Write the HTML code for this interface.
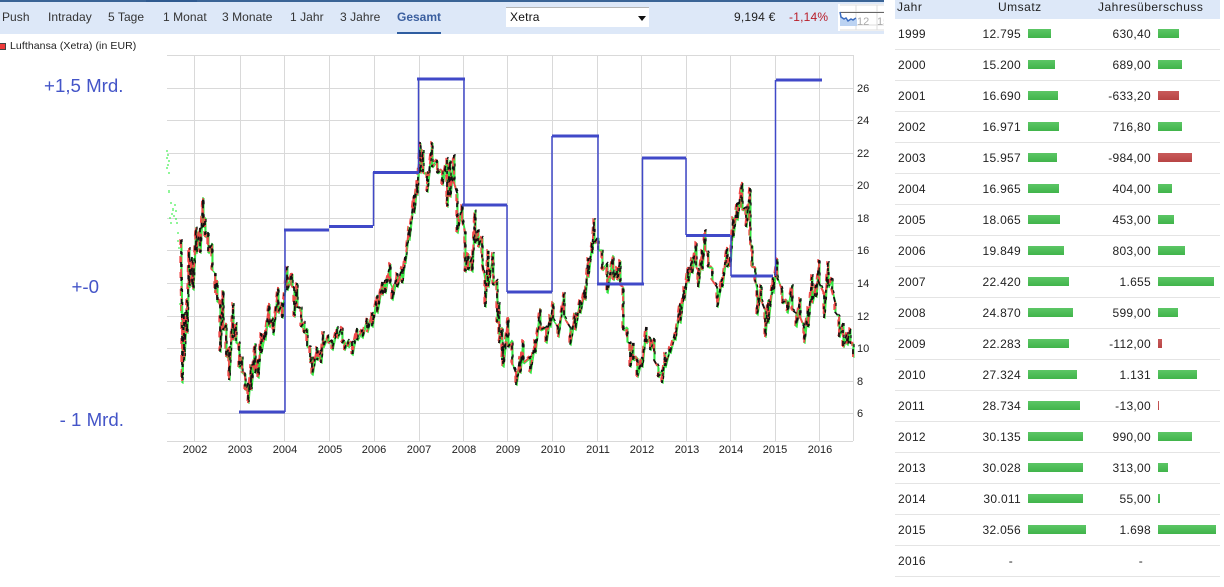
<!DOCTYPE html>
<html lang="de"><head><meta charset="utf-8"><title>Lufthansa</title>
<style>
html,body{margin:0;padding:0;background:#fff}
body{width:1224px;height:587px;position:relative;overflow:hidden;font-family:"Liberation Sans",Arial,sans-serif;color:#222}
.a{position:absolute;white-space:nowrap}
.n{top:10px;font-size:12px;line-height:15px;letter-spacing:.05px;color:#333}
.h{top:0;height:19px;line-height:14px;font-size:12px;letter-spacing:.5px;color:#222}
.r{position:absolute;left:895px;width:325px;height:30px;border-bottom:1px solid #e4e4e4;font-size:12px;letter-spacing:.3px;color:#222}
.r span{position:absolute;top:8px;line-height:15px}
.y{left:3px}.u{right:199px;text-align:right}.j{right:69px;text-align:right}
.b{position:absolute;top:10px;height:9px;background:linear-gradient(#5cc665,#40b44a)}
.b.m{background:linear-gradient(#c85a5a,#b84444)}
.b1{left:133px}.b2{left:263px}
.x{position:absolute;top:444px;width:40px;text-align:center;font-size:11px;line-height:13px;color:#222}
.l{position:absolute;left:857px;font-size:11px;line-height:13px;color:#222}
.big{position:absolute;font-size:18.700px;line-height:22px;color:#4455c8;text-align:right;width:124px;left:0}
</style></head><body>
<div class="a" style="left:0;top:2px;width:884px;height:32px;background:#dde8f8"></div>
<div class="a" style="left:0;top:0;width:884px;height:2px;background:#3a6496"></div>
<div class="a" style="left:146px;top:0;width:51px;height:2px;background:#2f5a90"></div>
<div class="a" style="left:397px;top:32px;width:44px;height:2px;background:#2f5da0"></div>
<span class="a n" style="left:2px">Push</span>
<span class="a n" style="left:48px">Intraday</span>
<span class="a n" style="left:108px">5 Tage</span>
<span class="a n" style="left:163px">1 Monat</span>
<span class="a n" style="left:222px">3 Monate</span>
<span class="a n" style="left:290px">1 Jahr</span>
<span class="a n" style="left:340px">3 Jahre</span>
<span class="a n" style="left:397px;font-weight:bold;color:#3b5f9f;letter-spacing:0">Gesamt</span>
<div class="a" style="left:506px;top:7px;width:143px;height:20px;background:#fff;border-top:1px solid #b5b5b5;box-sizing:border-box"></div>
<span class="a" style="left:510px;top:10px;font-size:12px;line-height:15px;letter-spacing:.2px;color:#111">Xetra</span>
<div class="a" style="left:638px;top:16px;width:0;height:0;border-left:4px solid transparent;border-right:4px solid transparent;border-top:5px solid #111"></div>
<span class="a" style="left:734px;top:10px;font-size:12px;line-height:15px;letter-spacing:.2px;color:#222">9,194 €</span>
<span class="a" style="left:789px;top:10px;font-size:12px;line-height:15px;letter-spacing:.2px;color:#b81c28">-1,14%</span>
<svg class="a" style="left:838px;top:4px" width="46" height="27" viewBox="0 0 46 27">
<rect width="46" height="27" fill="#fff"/>
<path d="M2 1H46M2 8H46M2 21H46M2 26H46M18 1V26M39 1V26" stroke="#ddd" fill="none"/>
<path d="M2 8.500H46" stroke="#666" fill="none"/>
<path d="M2 11L4 14 7 15 10 17 13 15 16 16 19 15V22H2Z" fill="#bcd3f2"/>
<path d="M2 8L3 13 6 15 8 14 10 17 13 15 15 16 18 14" stroke="#3a6cc0" stroke-width="1.500" fill="none"/>
<text x="19" y="21" font-size="11" fill="#aaa" font-family="Liberation Sans,sans-serif">12</text>
<text x="39" y="21" font-size="11" fill="#aaa" font-family="Liberation Sans,sans-serif">15</text>
</svg>

<div class="a" style="left:0;top:43px;width:6px;height:7px;box-sizing:border-box;background:#ee3a3a;border:1px solid #444;border-left:0"></div>
<span class="a" style="left:10px;top:40px;font-size:10.500px;line-height:13px;letter-spacing:.08px;color:#222">Lufthansa (Xetra) (in EUR)</span>

<div class="big" style="top:75px;width:123.500px">+1,5 Mrd.</div>
<div class="big" style="top:276px;width:99px">+-0</div>
<div class="big" style="top:409px">- 1 Mrd.</div>

<svg class="a" style="left:0;top:0" width="890" height="460" viewBox="0 0 890 460">
<defs>
<path id="p" d="M181 240L181 267 182 327 182 383 184 313 184 360 187 300 187 333 189 248 189 287 192 257 192 287 193 270 193 290 196 227 196 253 200 228 200 253 203 197 203 227 205 217 205 237 208 232 208 253 212 243 212 270 215 273 215 293 217 280 217 302 220 300 220 352 223 290 223 330 226 323 226 357 229 347 229 380 233 303 233 340 236 323 236 343 239 343 239 368 242 357 242 373 245 373 245 390 248 383 248 403 251 365 251 390 255 343 255 373 258 360 258 378 261 333 261 353 265 330 265 340 269 303 269 327 273 317 273 335 278 287 278 313 282 302 282 318 287 267 287 290 292 273 292 287 294 287 294 317 297 283 297 307 301 308 301 327 304 322 304 333 307 328 307 347 310 347 310 363 312 357 312 375 317 347 317 360 321 350 321 363 323 332 323 347 328 335 328 343 332 340 332 350 337 327 337 338 342 327 342 343 344 340 344 350 348 340 348 347 352 342 352 355 357 328 357 340 362 330 362 338 367 318 367 332 372 313 372 327 377 295 377 313 382 282 382 295 385 280 385 293 390 263 390 283 392 287 392 300 397 273 397 287 402 267 402 283 405 257 405 263 409 227 409 240 414 195 414 213 417 180 417 195 420 142 420 173 423 150 423 173 427 173 427 192 432 142 432 167 437 160 437 173 442 170 442 185 447 158 447 207 450 160 450 197 454 155 454 183 457 193 457 233 462 205 462 218 465 233 465 272 468 253 468 270 472 257 472 272 475 210 475 243 478 230 478 247 482 237 482 262 485 280 485 307 488 250 488 287 493 253 493 285 497 280 497 323 499 303 499 343 502 327 502 360 503 343 503 367 508 317 508 347 512 340 512 363 516 373 516 385 520 357 520 373 523 340 523 363 530 357 530 373 535 340 535 353 540 308 540 330 546 327 546 343 550 315 550 327 553 302 553 320 558 327 558 337 564 293 564 317 570 327 570 345 575 313 575 330 580 300 580 313 585 287 585 300 588 258 588 277 592 243 592 253 594 219 594 243 598 237 598 250 602 250 602 270 607 263 607 293 613 255 613 280 617 267 617 280 620 260 620 285 623 287 623 330 627 327 627 342 630 343 630 367 633 343 633 360 637 357 637 377 642 357 642 367 646 327 646 343 650 337 650 350 654 338 654 360 658 367 658 377 662 370 662 383 665 353 665 367 670 347 670 353 675 332 675 340 680 303 680 323 684 287 684 300 688 267 688 282 692 258 692 273 696 242 696 267 698 270 698 287 702 250 702 270 705 230 705 250 708 253 708 267 712 267 712 280 717 287 717 307 722 277 722 287 727 247 727 267 730 257 730 267 733 217 733 237 737 203 737 220 742 182 742 210 746 207 746 227 750 188 750 245 752 245 752 267 755 267 755 280 757 290 757 315 761 285 761 300 765 310 765 337 768 300 768 323 773 277 773 293 777 258 777 277 782 290 782 303 787 300 787 313 792 285 792 310 796 313 796 327 800 298 800 317 804 327 804 343 808 307 808 327 812 275 812 303 816 285 816 297 819 260 819 283 824 293 824 318 828 262 828 287 832 278 832 290 835 302 835 312 839 317 839 337 843 323 843 347 847 333 847 345 850 328 850 343 853 343 853 357"/>
</defs>
<g stroke="#d9d9d9" stroke-width="1" fill="none">
<path d="M167 55.500H853M167 88.500H853M167 120.500H853M167 153.500H853M167 185.500H853M167 218.500H853M167 250.500H853M167 283.500H853M167 316.500H853M167 348.500H853M167 381.500H853M167 413.500H853M167 441.500H853"/>
<path d="M194.500 55V441M240.500 55V441M284.500 55V441M329.500 55V441M374.500 55V441M419.500 55V441M463.500 55V441M507.500 55V441M552.500 55V441M597.500 55V441M641.500 55V441M686.500 55V441M730.500 55V441M775.500 55V441M819.500 55V441M853.500 55V441"/>
</g>
<g fill="none" stroke-linejoin="bevel">
<use href="#p" stroke="#33e640" stroke-width="1.200"/>
<use href="#p" stroke="#33e640" stroke-width="1" transform="translate(1 1)"/>
<use href="#p" stroke="#f04848" stroke-width="1.800" stroke-dasharray="8 9 5 7"/>
<use href="#p" stroke="#f04848" stroke-width="1.300" stroke-dasharray="6 11 7 9" transform="translate(-1 -1)"/>
<use href="#p" stroke="#111" stroke-width="1.700" stroke-dasharray="4 7 3 8 5 10"/>
<use href="#p" stroke="#111" stroke-width="1.300" stroke-dasharray="3 10 3 9" transform="translate(1 -1)"/>
</g>
<path d="M167 150v2M168 154v2M167 157v2M169 160v2M168 164v2M167 167v2M169 172v2M169 190v3M171 202v2M175 204v2M173 208v3M176 210v2M172 213v2M174 215v2M170 217v2M176 218v2M171 222v2M177 222v2M178 232v2M178 240v2M179 247v2M180 303v2M181 311v2" stroke="#22ee33" fill="none"/>
<g fill="none" stroke="#4049c8">
<path stroke-width="1.500" d="M285 412V230M373.500 226V172M418.500 172V79M464 79V205M507 205V292M552 292V136M598 136V284M642.500 284V158M686 158V235M731 235V276M775.500 276V80"/>
<path stroke-width="3" d="M239 412H285M284 230H329M329 226.500H373M373 172.500H419M417 79H465M462 205H507M507 292H552M552 136H599M597 284H644M642 158H686M686 235.500H730M731 276H773M776 80H822"/>
</g>
</svg>

<div class="x" style="left:175px">2002</div><div class="x" style="left:220px">2003</div><div class="x" style="left:265px">2004</div><div class="x" style="left:310px">2005</div><div class="x" style="left:354px">2006</div><div class="x" style="left:399px">2007</div><div class="x" style="left:444px">2008</div><div class="x" style="left:488px">2009</div><div class="x" style="left:533px">2010</div><div class="x" style="left:578px">2011</div><div class="x" style="left:622px">2012</div><div class="x" style="left:667px">2013</div><div class="x" style="left:711px">2014</div><div class="x" style="left:755px">2015</div><div class="x" style="left:800px">2016</div>

<div class="l" style="top:83px">26</div><div class="l" style="top:115px">24</div><div class="l" style="top:148px">22</div><div class="l" style="top:180px">20</div><div class="l" style="top:213px">18</div><div class="l" style="top:245px">16</div><div class="l" style="top:278px">14</div><div class="l" style="top:311px">12</div><div class="l" style="top:343px">10</div><div class="l" style="top:376px">8</div><div class="l" style="top:408px">6</div>

<div class="a" style="left:895px;top:0;width:325px;height:19px;background:#dde8f8"></div>
<span class="a h" style="left:897px">Jahr</span>
<span class="a h" style="left:998px">Umsatz</span>
<span class="a h" style="left:1098px">Jahresüberschuss</span>

<div class="r" style="top:19px"><span class="y">1999</span><span class="u">12.795</span><i class="b b1" style="width:23px"></i><span class="j">630,40</span><i class="b b2" style="width:21px"></i></div>
<div class="r" style="top:50px"><span class="y">2000</span><span class="u">15.200</span><i class="b b1" style="width:27px"></i><span class="j">689,00</span><i class="b b2" style="width:24px"></i></div>
<div class="r" style="top:81px"><span class="y">2001</span><span class="u">16.690</span><i class="b b1" style="width:30px"></i><span class="j">-633,20</span><i class="b b2 m" style="width:21px"></i></div>
<div class="r" style="top:112px"><span class="y">2002</span><span class="u">16.971</span><i class="b b1" style="width:31px"></i><span class="j">716,80</span><i class="b b2" style="width:24px"></i></div>
<div class="r" style="top:143px"><span class="y">2003</span><span class="u">15.957</span><i class="b b1" style="width:29px"></i><span class="j">-984,00</span><i class="b b2 m" style="width:34px"></i></div>
<div class="r" style="top:174px"><span class="y">2004</span><span class="u">16.965</span><i class="b b1" style="width:31px"></i><span class="j">404,00</span><i class="b b2" style="width:14px"></i></div>
<div class="r" style="top:205px"><span class="y">2005</span><span class="u">18.065</span><i class="b b1" style="width:32px"></i><span class="j">453,00</span><i class="b b2" style="width:16px"></i></div>
<div class="r" style="top:236px"><span class="y">2006</span><span class="u">19.849</span><i class="b b1" style="width:36px"></i><span class="j">803,00</span><i class="b b2" style="width:27px"></i></div>
<div class="r" style="top:267px"><span class="y">2007</span><span class="u">22.420</span><i class="b b1" style="width:41px"></i><span class="j">1.655</span><i class="b b2" style="width:56px"></i></div>
<div class="r" style="top:298px"><span class="y">2008</span><span class="u">24.870</span><i class="b b1" style="width:45px"></i><span class="j">599,00</span><i class="b b2" style="width:20px"></i></div>
<div class="r" style="top:329px"><span class="y">2009</span><span class="u">22.283</span><i class="b b1" style="width:41px"></i><span class="j">-112,00</span><i class="b b2 m" style="width:4px"></i></div>
<div class="r" style="top:360px"><span class="y">2010</span><span class="u">27.324</span><i class="b b1" style="width:49px"></i><span class="j">1.131</span><i class="b b2" style="width:39px"></i></div>
<div class="r" style="top:391px"><span class="y">2011</span><span class="u">28.734</span><i class="b b1" style="width:52px"></i><span class="j">-13,00</span><i class="b b2 m" style="width:1px"></i></div>
<div class="r" style="top:422px"><span class="y">2012</span><span class="u">30.135</span><i class="b b1" style="width:55px"></i><span class="j">990,00</span><i class="b b2" style="width:34px"></i></div>
<div class="r" style="top:453px"><span class="y">2013</span><span class="u">30.028</span><i class="b b1" style="width:55px"></i><span class="j">313,00</span><i class="b b2" style="width:10px"></i></div>
<div class="r" style="top:484px"><span class="y">2014</span><span class="u">30.011</span><i class="b b1" style="width:55px"></i><span class="j">55,00</span><i class="b b2" style="width:2px"></i></div>
<div class="r" style="top:515px"><span class="y">2015</span><span class="u">32.056</span><i class="b b1" style="width:58px"></i><span class="j">1.698</span><i class="b b2" style="width:58px"></i></div>
<div class="r" style="top:546px"><span class="y">2016</span><span class="u" style="right:207px">-</span><span class="j" style="right:77px">-</span></div>
</body></html>
